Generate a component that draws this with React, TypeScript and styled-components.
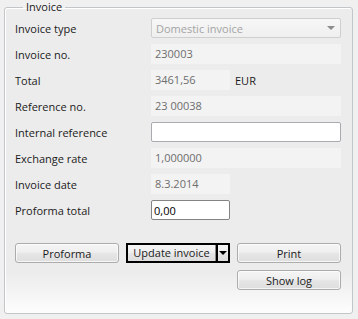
import React from "react";
import styled, { createGlobalStyle } from "styled-components";

const Global = createGlobalStyle`
  html, body { margin: 0; padding: 0; background: #f0f0f0; }
  body { font-family: "Open Sans", "Noto Sans", sans-serif; font-size: 11px; color: #1b1b1b; }
  * { box-sizing: border-box; }
`;

const Page = styled.div`
  width: 358px;
  height: 319px;
  padding: 0 5px 0 4px;
`;

const Group = styled.fieldset`
  margin: 0;
  height: 314px;
  padding: 4px 11px 22px 9px;
  border: 1px solid #c3c6c8;
  border-radius: 3px;
  box-shadow: inset 1px 1px 0 #ffffff;
  background: linear-gradient(to bottom, #ececec 0, #ececec calc(100% - 40px), #fdfdfd 100%);
  min-width: 0;
`;

const Legend = styled.legend`
  padding: 0 3px;
  margin-left: 9px;
  line-height: 14px;
  font-size: 11px;
  color: #1b1b1b;
`;

const Form = styled.div`
  display: grid;
  grid-template-columns: 137px 1fr;
  grid-auto-rows: 20px;
  row-gap: 6px;
  align-items: center;
`;

const Label = styled.div`
  padding-left: 1px;
  white-space: nowrap;
`;

const FieldLine = styled.div`
  display: flex;
  align-items: center;
  gap: 5px;
  height: 20px;
`;

const ReadOnly = styled.div<{ $short?: boolean }>`
  height: 20px;
  width: ${(p) => (p.$short ? "79px" : "100%")};
  background: #f3f3f3;
  color: #6e6e6e;
  padding: 0 4px;
  line-height: 20px;
`;

const Input = styled.input<{ $short?: boolean; $dark?: boolean }>`
  height: 20px;
  width: ${(p) => (p.$short ? "79px" : "100%")};
  border: 1px solid ${(p) => (p.$dark ? "#848484" : "#a9abb0")};
  border-radius: 2px;
  background: #fff;
  font: inherit;
  color: #000;
  padding: 0 2px;
  outline: none;
`;

const Combo = styled.div`
  height: 20px;
  width: 100%;
  border: 1px solid #cfcfcf;
  border-radius: 2px;
  background: linear-gradient(#f7f7f7, #efefef);
  display: flex;
  align-items: center;
  justify-content: space-between;
  padding: 0 5px 0 4px;
  color: #a4a4a4;
`;

const Arrow = styled.span<{ $color: string }>`
  width: 0;
  height: 0;
  border-left: 4px solid transparent;
  border-right: 4px solid transparent;
  border-top: 4px solid ${(p) => p.$color};
`;

const Buttons = styled.div`
  margin: 23px 0 0 1px;
  display: grid;
  grid-template-columns: 104px 104px 104px;
  column-gap: 7px;
  row-gap: 7px;
  grid-auto-rows: 20px;
`;

const Button = styled.button<{ $col?: number }>`
  grid-column: ${(p) => p.$col ?? "auto"};
  height: 20px;
  border: 1px solid #acacac;
  border-radius: 3px;
  background: linear-gradient(#f5f5f5 0%, #efefef 45%, #e5e5e5 55%, #dedede 100%);
  font: inherit;
  color: #1b1b1b;
  padding: 0;
  box-shadow: inset 0 0 0 1px rgba(255,255,255,0.7);
`;

const SplitButton = styled.div`
  height: 20px;
  border: 2px solid #000;
  display: flex;
  background: linear-gradient(#f5f5f5 0%, #efefef 45%, #e5e5e5 55%, #dedede 100%);
`;

const SplitMain = styled.div`
  flex: 1;
  display: flex;
  align-items: center;
  justify-content: center;
  line-height: 16px;
  border-right: 1px solid #8a8a8a;
`;

const SplitDrop = styled.div`
  width: 12px;
  border-left: 2px solid #000;
  display: flex;
  align-items: center;
  justify-content: center;
`;

export default function App() {
  return (
    <Page>
      <Global />
      <Group>
        <Legend>Invoice</Legend>
        <Form>
          <Label>Invoice type</Label>
          <Combo>
            <span>Domestic invoice</span>
            <Arrow $color="#8c8c8c" />
          </Combo>
          <Label>Invoice no.</Label>
          <ReadOnly>230003</ReadOnly>
          <Label>Total</Label>
          <FieldLine>
            <ReadOnly $short>3461,56</ReadOnly>
            <span>EUR</span>
          </FieldLine>
          <Label>Reference no.</Label>
          <ReadOnly>23 00038</ReadOnly>
          <Label>Internal reference</Label>
          <Input defaultValue="" />
          <Label>Exchange rate</Label>
          <ReadOnly>1,000000</ReadOnly>
          <Label>Invoice date</Label>
          <ReadOnly $short>8.3.2014</ReadOnly>
          <Label>Proforma total</Label>
          <FieldLine>
            <Input $short $dark defaultValue="0,00" />
          </FieldLine>
        </Form>
        <Buttons>
          <Button>Proforma</Button>
          <SplitButton>
            <SplitMain>Update invoice</SplitMain>
            <SplitDrop>
              <Arrow $color="#000" />
            </SplitDrop>
          </SplitButton>
          <Button>Print</Button>
          <Button $col={3}>Show log</Button>
        </Buttons>
      </Group>
    </Page>
  );
}
